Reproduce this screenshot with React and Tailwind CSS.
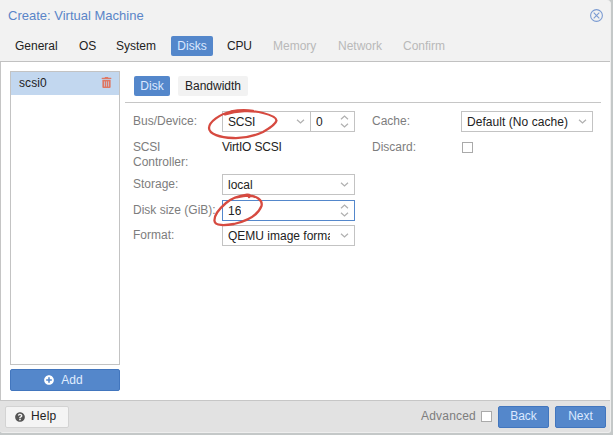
import React from 'react';
import { FaTrashAlt, FaPlusCircle, FaQuestionCircle } from 'react-icons/fa';

function Chevron({ up = false }) {
  return (
    <svg width="9" height="5" viewBox="0 0 9 5" fill="none" stroke="#b0b0b0" strokeWidth="1.2">
      <path d={up ? 'M1 4.3 4.5 1 8 4.3' : 'M1 .7 4.5 4 8 .7'} />
    </svg>
  );
}

function Field({ children, spinner = false, className = '' }) {
  return (
    <div className={`flex h-[21px] shrink-0 items-center justify-between border bg-white pl-[5px] pr-[5px] text-[#222] ${className}`}>
      <span className="overflow-hidden whitespace-nowrap pt-px">{children}</span>
      {spinner ? (
        <span className="flex shrink-0 flex-col gap-[3px]">
          <Chevron up />
          <Chevron />
        </span>
      ) : (
        <span className="shrink-0"><Chevron /></span>
      )}
    </div>
  );
}

function Row({ label, children, className = '' }) {
  return (
    <div className={`flex items-start ${className}`}>
      <div className="w-[89px] shrink-0 whitespace-nowrap pt-[3px] leading-[15px] text-[#7d7d7d]">{label}</div>
      {children}
    </div>
  );
}

const steps = [
  ['General', 'w-[43px] mr-[21px]'],
  ['OS', 'w-[17px] mr-5'],
  ['System', 'w-10 mr-[15px]'],
];

const later = [
  ['Memory', 'w-[43px] mr-[22px]'],
  ['Network', 'w-11 mr-[21px]'],
  ['Confirm', 'w-[42px]'],
];

export default function App() {
  return (
    <div className="relative flex h-[435px] w-[613px] flex-col overflow-hidden bg-[#c4c8c8] pr-[2px] pb-[2px] font-['Liberation_Sans',Arial,sans-serif] text-[12px] leading-[15px] text-[#222]">
      <div className="flex min-h-0 flex-1 flex-col overflow-hidden rounded-tr-[4px] rounded-b-[3px] border-r border-b border-[#eeeeee] bg-[#f2f2f2]">
        <header className="flex h-[62px] shrink-0 flex-col border-b border-[#c1c1c1]">
          <div className="flex h-[31px] items-center justify-between pl-2 pr-[7px]">
            <h1 className="whitespace-nowrap text-[13px] text-[#5a85c8]">Create: Virtual Machine</h1>
            <svg width="13" height="13" viewBox="0 0 13 13" fill="none" stroke="#7b9bd2" strokeWidth="1.1">
              <circle cx="6.5" cy="6.5" r="5.9" />
              <path d="m3.7 3.7 5.6 5.6M9.3 3.7 3.7 9.3" />
            </svg>
          </div>
          <nav className="flex h-[30px] items-center pl-[15px]">
            {steps.map(([name, size]) => (
              <span key={name} className={`shrink-0 whitespace-nowrap ${size}`}>{name}</span>
            ))}
            <span className="mb-px mr-3.5 flex h-5 w-[42px] shrink-0 items-center justify-center rounded-[2px] bg-[#5487cb] pt-px text-[#dbe9ff]">Disks</span>
            <span className="mr-[22px] w-6 shrink-0 tracking-[-0.2px]">CPU</span>
            {later.map(([name, size]) => (
              <span key={name} className={`shrink-0 whitespace-nowrap text-[#b9b9b9] ${size}`}>{name}</span>
            ))}
          </nav>
        </header>

        <main className="flex min-h-0 flex-1 border-l border-[#c5c5c5] bg-white pl-[9px] pt-[9px]">
          <aside className="flex w-[110px] shrink-0 flex-col">
            <div className="h-[294px] border border-[#c3c3c3]">
              <div className="flex h-[23px] items-center justify-between bg-[#c2d7ef] pl-2 pr-[7px]">
                <span className="tracking-[0.1px]">scsi0</span>
                <FaTrashAlt className="mb-[2px] h-[11px] w-[11px] text-[#df7763]" />
              </div>
            </div>
            <button className="mt-1 flex h-[22px] items-center justify-center gap-[7px] rounded-[2px] border border-[#4276be] bg-[#5487cb] pr-[3px] text-[#e0edff]">
              <FaPlusCircle className="h-[10px] w-[10px] text-white" />
              <span>Add</span>
            </button>
          </aside>

          <section className="ml-[5px] flex w-[476px] flex-col">
            <div className="flex h-8 items-start gap-2 border-b border-[#c6c6c6] pl-[9px] pt-[5px]">
              <span className="flex h-5 w-9 items-center justify-center rounded-[2px] bg-[#5487cb] text-[#dbe9ff]">Disk</span>
              <span className="flex h-5 w-[70px] items-center justify-center rounded-[2px] bg-[#f2f2f2]">Bandwidth</span>
            </div>
            <div className="flex pl-2 pt-2">
              <div className="w-[239px] shrink-0">
                <Row label="Bus/Device:" className="h-[26px]">
                  <Field className="w-[89px] border-[#c3c3c3] tracking-[-0.2px]">SCSI</Field>
                  <Field spinner className="-ml-px w-[45px] border-[#c3c3c3]">0</Field>
                </Row>
                <Row label={<><span className="tracking-[-0.2px]">SCSI</span><br />Controller:</>} className="h-[37px]">
                  <span className="pt-[3px] leading-[15px] tracking-[-0.2px]">VirtIO SCSI</span>
                </Row>
                <Row label="Storage:" className="h-[26px]">
                  <Field className="w-[133px] border-[#c3c3c3]">local</Field>
                </Row>
                <Row label="Disk size (GiB):" className="h-[25px]">
                  <Field spinner className="w-[133px] border-[#5487cb]">16</Field>
                </Row>
                <Row label="Format:">
                  <Field className="w-[133px] border-[#c3c3c3]"><span className="block w-[102px] overflow-hidden">QEMU image format</span></Field>
                </Row>
              </div>
              <div>
                <Row label="Cache:" className="h-[26px]">
                  <Field className="w-[132px] border-[#c3c3c3] tracking-[0.05px]">Default (No cache)</Field>
                </Row>
                <Row label="Discard:">
                  <span className="mt-[5px] ml-[1px] h-[11px] w-[11px] border border-[#aaa]" />
                </Row>
              </div>
            </div>
          </section>
        </main>

        <footer className="flex h-8 shrink-0 items-center border-t border-[#c6c6c6] bg-[#e2e2e2] pl-[5px] pr-1">
          <button className="flex h-[22px] w-16 items-center gap-[6px] rounded-[2px] border border-[#d3d3d3] bg-[#f4f4f4] pl-[9px]">
            <FaQuestionCircle className="h-[10px] w-[10px] text-[#555]" />
            <span className="tracking-[0.2px]">Help</span>
          </button>
          <span className="ml-auto mr-[5px] tracking-[0.2px] text-[#7d7d7d]">Advanced</span>
          <span className="mr-[6px] h-[11px] w-[11px] border border-[#aaa] bg-white" />
          <button className="mr-[6px] h-[22px] w-[51px] rounded-[2px] border border-[#4276be] bg-[#5487cb] text-[#dbe9ff]">Back</button>
          <button className="h-[22px] w-[51px] rounded-[2px] border border-[#4276be] bg-[#5487cb] text-[#dbe9ff]">Next</button>
        </footer>
      </div>

      <svg className="pointer-events-none absolute left-[200px] top-[100px]" width="90" height="135" viewBox="200 100 90 135" fill="none" stroke="#d64a40" strokeWidth="2.3" strokeLinecap="round" strokeLinejoin="round">
        <path d="M225 114.5C237 110.5 252 110 263 113C271 115 276.500 117.500 276.500 120.500C276 124 270 128 263 132C254 136 243 138.500 233 138C220 137.500 209 134 209 128C209 122 220 114 231 111.500C238 110.200 247 110 253 111" />
        <path d="M249 197C251 195.500 250 194.500 247 194.700C241 195.500 232 198 226 203C219 209 214 216 214.500 221C215 226 225 225.500 234 224C247 221 258 215 261.500 206C263 200 256 195.500 248 195.500C243 195.500 240 196.500 236 197.500" />
      </svg>
    </div>
  );
}
